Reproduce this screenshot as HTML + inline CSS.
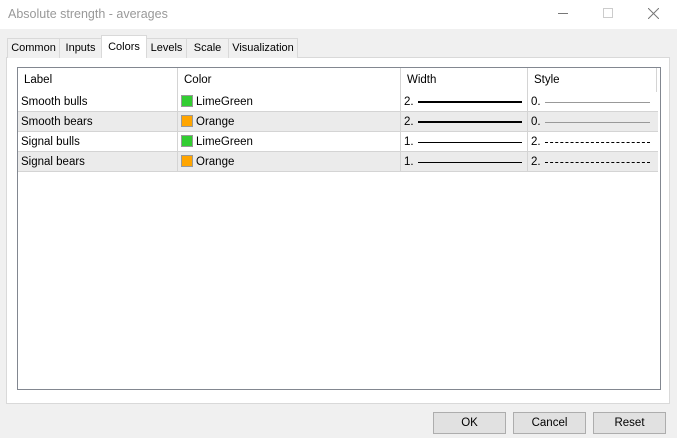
<!DOCTYPE html><html><head><style>
*{margin:0;padding:0;box-sizing:border-box}
body{width:677px;height:438px;background:#f0f0f0;font-family:"Liberation Sans",sans-serif;font-size:11.5px;color:#000;position:relative;overflow:hidden}
.a{position:absolute}
.title{left:0;top:0;width:677px;height:29px;background:#fff}
.tab{position:absolute;top:38px;height:20px;border:1px solid #d9d9d9;border-bottom:none;background:#f0f0f0;text-align:center;line-height:18px;font-size:11px}
.sel{top:35px;height:23px;background:#fff;z-index:2;line-height:22px}
.panel{left:6px;top:57px;width:664px;height:347px;background:#fff;border:1px solid #d9d9d9}
.tbl{left:17px;top:67px;width:644px;height:323px;border:1px solid #828790;background:#fff}
.row{position:absolute;left:0;width:640px;height:20px;border-bottom:1px solid #d4d4d4;line-height:20px}
.c{position:absolute;top:0;height:100%;border-left:1px solid #d4d4d4;padding-left:3px}
.sw{display:inline-block;width:12px;height:12px;vertical-align:-2px;margin-right:3px;border:1px solid #999}
.btn{position:absolute;top:412px;width:73px;height:22px;border:1px solid #adadad;background:#e1e1e1;text-align:center;line-height:20px}
</style></head><body>
<div class="a title"><span class="a" style="left:8px;top:7px;font-size:12.5px;color:#999">Absolute strength - averages</span>
<div class="a" style="left:558px;top:13px;width:10px;border-top:1px solid #777"></div>
<div class="a" style="left:603px;top:8px;width:10px;height:10px;border:1px solid #ccc"></div>
<svg class="a" style="left:648px;top:8px" width="11" height="11"><path d="M0 0L11 11M11 0L0 11" stroke="#777" stroke-width="1"/></svg></div>
<div class="a panel"></div>
<div class="tab" style="left:7px;width:53px">Common</div>
<div class="tab" style="left:59px;width:43px">Inputs</div>
<div class="tab sel" style="left:101px;width:46px">Colors</div>
<div class="tab" style="left:146px;width:41px">Levels</div>
<div class="tab" style="left:186px;width:43px">Scale</div>
<div class="tab" style="left:228px;width:70px">Visualization</div>
<div class="a tbl">
<div class="row" style="top:0;height:24px;line-height:24px;border:none"><div class="c" style="left:0;border:none;padding-left:6px">Label</div><div class="c" style="left:159px;padding-left:6px">Color</div><div class="c" style="left:382px;padding-left:6px">Width</div><div class="c" style="left:509px;padding-left:6px">Style</div><div class="c" style="left:638px;width:1px"></div></div>
<div class="row" style="top:24px"><div class="c" style="left:0;border:none;padding-left:3px">Smooth bulls</div><div class="c" style="left:159px"><span class="sw" style="background:#32cd32"></span>LimeGreen</div><div class="c" style="left:382px">2. <span class="a" style="left:17px;top:9px;width:104px;border-top:2px solid #000"></span></div><div class="c" style="left:509px">0. <span class="a" style="left:17px;top:10px;width:105px;border-top:1px solid #999"></span></div></div>
<div class="row" style="top:44px;background:#ebebeb"><div class="c" style="left:0;border:none;padding-left:3px">Smooth bears</div><div class="c" style="left:159px"><span class="sw" style="background:#ffa500"></span>Orange</div><div class="c" style="left:382px">2. <span class="a" style="left:17px;top:9px;width:104px;border-top:2px solid #000"></span></div><div class="c" style="left:509px">0. <span class="a" style="left:17px;top:10px;width:105px;border-top:1px solid #999"></span></div></div>
<div class="row" style="top:64px"><div class="c" style="left:0;border:none;padding-left:3px">Signal bulls</div><div class="c" style="left:159px"><span class="sw" style="background:#32cd32"></span>LimeGreen</div><div class="c" style="left:382px">1. <span class="a" style="left:17px;top:10px;width:104px;border-top:1px solid #000"></span></div><div class="c" style="left:509px">2. <span class="a" style="left:17px;top:10px;width:105px;border-top:1px dashed #000"></span></div></div>
<div class="row" style="top:84px;background:#ebebeb"><div class="c" style="left:0;border:none;padding-left:3px">Signal bears</div><div class="c" style="left:159px"><span class="sw" style="background:#ffa500"></span>Orange</div><div class="c" style="left:382px">1. <span class="a" style="left:17px;top:10px;width:104px;border-top:1px solid #000"></span></div><div class="c" style="left:509px">2. <span class="a" style="left:17px;top:10px;width:105px;border-top:1px dashed #000"></span></div></div>
</div>
<div class="btn" style="left:433px">OK</div>
<div class="btn" style="left:513px">Cancel</div>
<div class="btn" style="left:593px">Reset</div>
</body></html>
